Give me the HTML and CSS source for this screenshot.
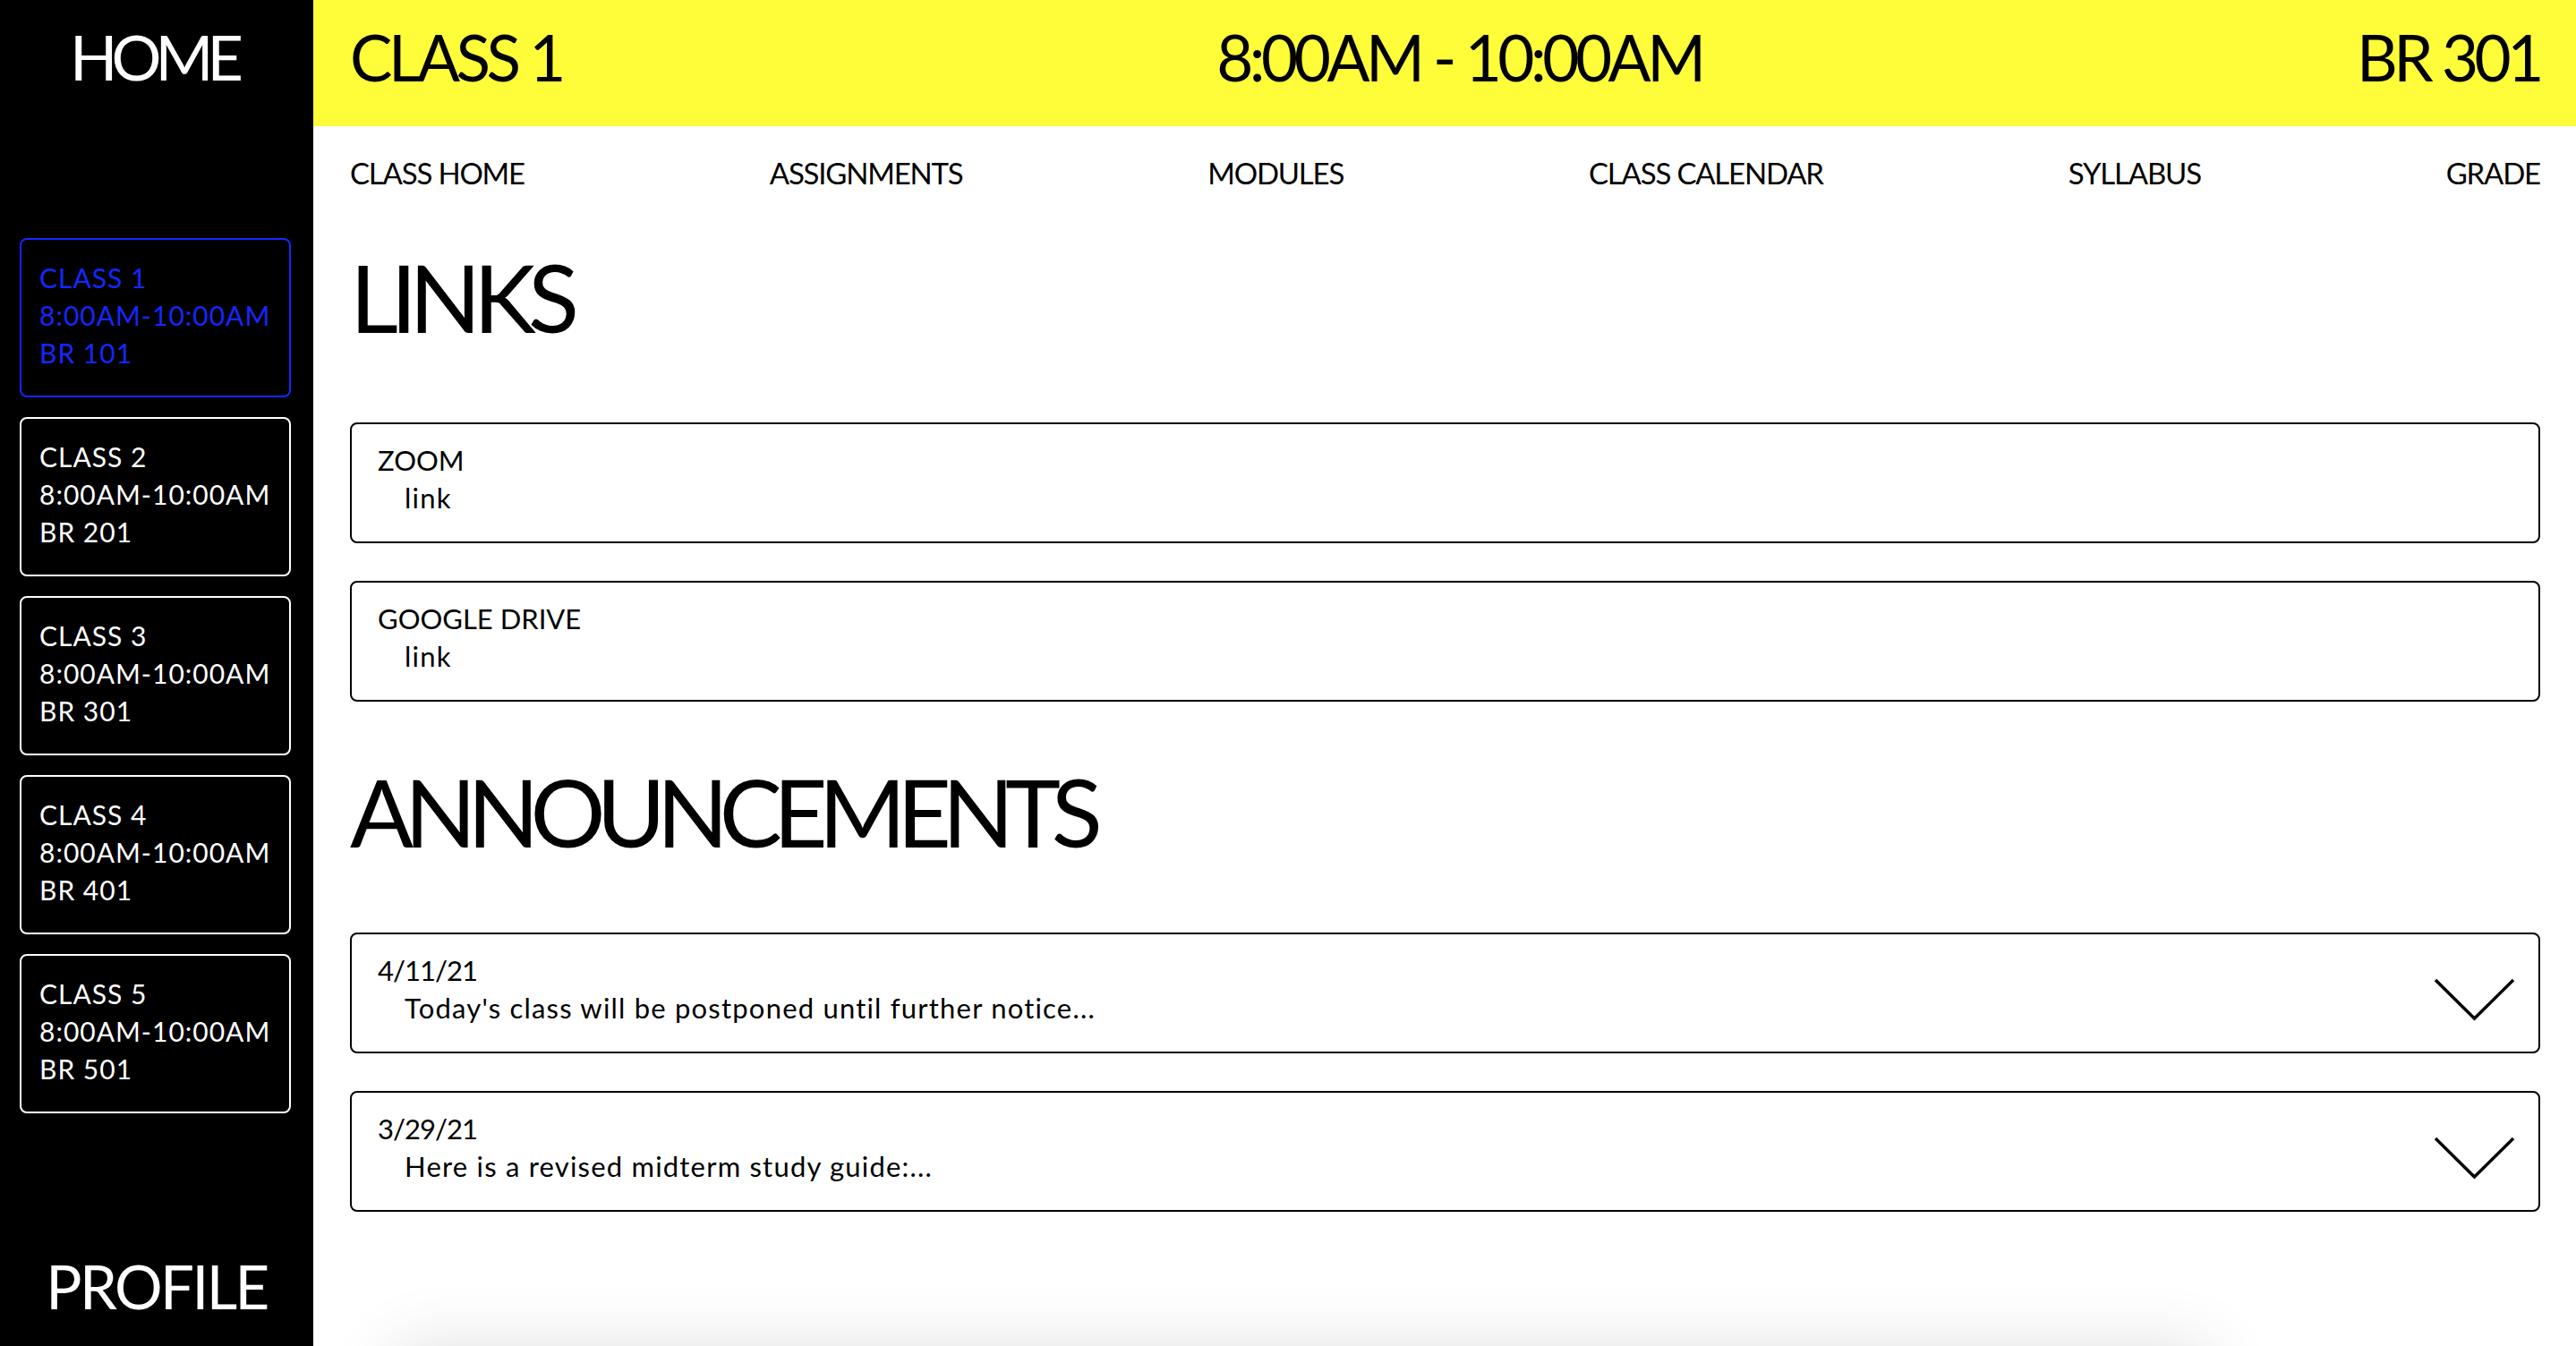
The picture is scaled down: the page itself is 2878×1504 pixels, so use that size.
FILE: index.html
```html
<!DOCTYPE html>
<html>
<head>
<meta charset="utf-8">
<link rel="stylesheet" href="styles.css">
</head>
<body>
<div class="app">
  <aside class="sidebar">
    <div class="brand">HOME</div>
    <div class="class-list">
      <div class="class-card active">CLASS 1<br>8:00AM-10:00AM<br>BR 101</div>
      <div class="class-card">CLASS 2<br>8:00AM-10:00AM<br>BR 201</div>
      <div class="class-card">CLASS 3<br>8:00AM-10:00AM<br>BR 301</div>
      <div class="class-card">CLASS 4<br>8:00AM-10:00AM<br>BR 401</div>
      <div class="class-card">CLASS 5<br>8:00AM-10:00AM<br>BR 501</div>
    </div>
    <div class="profile">PROFILE</div>
  </aside>
  <main class="main">
    <header class="topbar">
      <span>CLASS 1</span>
      <span>8:00AM - 10:00AM</span>
      <span>BR 301</span>
    </header>
    <div class="content">
      <nav class="nav">
        <span>CLASS HOME</span>
        <span>ASSIGNMENTS</span>
        <span>MODULES</span>
        <span>CLASS CALENDAR</span>
        <span>SYLLABUS</span>
        <span>GRADE</span>
      </nav>
      <h2 class="section-title">LINKS</h2>
      <div class="card">
        <div class="card-text">
          <div>ZOOM</div>
          <div class="indent">link</div>
        </div>
      </div>
      <div class="card">
        <div class="card-text">
          <div>GOOGLE DRIVE</div>
          <div class="indent">link</div>
        </div>
      </div>
      <h2 class="section-title announce">ANNOUNCEMENTS</h2>
      <div class="card">
        <div class="card-text">
          <div class="date">4/11/21</div>
          <div class="indent">Today's class will be postponed until further notice...</div>
        </div>
        <svg class="chevron" width="92" height="48" viewBox="0 0 92 48"><polyline points="2,2 45.5,45 89,2" fill="none" stroke="#000" stroke-width="3.5"/></svg>
      </div>
      <div class="card">
        <div class="card-text">
          <div class="date">3/29/21</div>
          <div class="indent">Here is a revised midterm study guide:...</div>
        </div>
        <svg class="chevron" width="92" height="48" viewBox="0 0 92 48"><polyline points="2,2 45.5,45 89,2" fill="none" stroke="#000" stroke-width="3.5"/></svg>
      </div>
      <div class="below-panel"></div>
    </div>
  </main>
</div>
</body>
</html>
```
FILE: styles.css
```css
* { box-sizing: border-box; }
html, body { margin: 0; padding: 0; }
body {
  font-family: "Lato", "Noto Sans", sans-serif;
  color: #000;
  background: #fff;
}
.app {
  display: flex;
  height: 100vh;
  overflow: hidden;
}
.sidebar {
  width: 350px;
  flex: 0 0 350px;
  background: #000;
  color: #fff;
  display: flex;
  flex-direction: column;
}
.brand {
  height: 141px;
  padding-bottom: 15px;
  display: flex;
  align-items: center;
  justify-content: center;
  font-size: 70px;
  line-height: 1;
  letter-spacing: -7px;
  text-indent: -7px;
}
.class-list {
  margin-top: 125px;
  padding-left: 22px;
  display: flex;
  flex-direction: column;
  gap: 22px;
}
.class-card {
  width: 303px;
  height: 178px;
  border: 2px solid #fff;
  border-radius: 8px;
  padding: 21px 0 0 20px;
  font-size: 30px;
  line-height: 42px;
  letter-spacing: 1px;
  white-space: nowrap;
}
.class-card.active {
  border-color: #1428ff;
  color: #1428ff;
}
.profile {
  margin-top: auto;
  padding-bottom: 32px;
  text-align: center;
  font-size: 67px;
  line-height: 70px;
  letter-spacing: -2.5px;
}
.main {
  flex: 1;
  display: flex;
  flex-direction: column;
  overflow: hidden;
}
.topbar {
  height: 141px;
  flex: 0 0 141px;
  background: #fffd3a;
  display: flex;
  justify-content: space-between;
  align-items: center;
  padding: 0 40px 15px 41px;
  font-size: 71px;
  line-height: 1;
  letter-spacing: -4.5px;
}
.content {
  padding: 0 40px 0 41px;
}
.nav {
  display: flex;
  justify-content: space-between;
  padding-top: 35px;
  font-size: 33px;
  line-height: 34px;
  letter-spacing: -1.2px;
}
.section-title {
  margin: 68px 0 87px;
  font-weight: 400;
  font-size: 105px;
  line-height: 107px;
  letter-spacing: -8.5px;
}
.section-title.announce {
  margin-top: 69px;
  margin-bottom: 82px;
  letter-spacing: -10px;
}
.card {
  border: 2px solid #000;
  border-radius: 8px;
  height: 135px;
  padding: 19px 29px 0 29px;
  display: flex;
  justify-content: space-between;
  margin-bottom: 42px;
  font-size: 31px;
  line-height: 42px;
}
.card-text .date {
  letter-spacing: -1px;
}
.card-text .indent {
  padding-left: 30px;
  letter-spacing: 1.2px;
}
.chevron {
  align-self: center;
  margin-top: -4px;
  margin-right: -4px;
}
.below-panel {
  margin: 150px 370px 0 50px;
  height: 300px;
  background: #fff;
  box-shadow: 0 0 70px rgba(0, 0, 0, 0.12);
}
```
